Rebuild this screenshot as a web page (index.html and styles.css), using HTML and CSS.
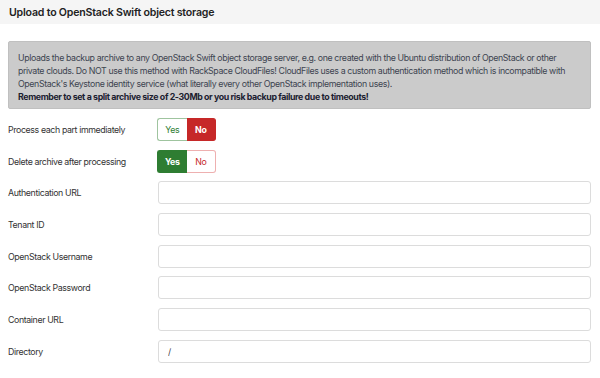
FILE: index.html
```html
<!DOCTYPE html>
<html lang="en">
<head>
  <meta charset="UTF-8">
  <meta name="viewport" content="width=device-width, initial-scale=1.0">
  <link rel="stylesheet" href="styles.css">
  <title>Upload to OpenStack Swift object storage</title>
</head>
<body>
  <div class="card">
    <div class="card-header">
      <h3>Upload to OpenStack Swift object storage</h3>
    </div>
    <div class="card-body">
      <div class="info">
        Uploads the backup archive to any OpenStack Swift object storage server, e.g. one created with the Ubuntu distribution of OpenStack or other private clouds. Do NOT use this method with RackSpace CloudFiles! CloudFiles uses a custom authentication method which is incompatible with OpenStack's Keystone identity service (what literally every other OpenStack implementation uses).<br>
        <strong>Remember to set a split archive size of 2-30Mb or you risk backup failure due to timeouts!</strong>
      </div>

      <div class="form">
        <label>Process each part immediately</label>
        <div class="toggle">
          <span class="yes">Yes</span>
          <span class="no active">No</span>
        </div>

        <label>Delete archive after processing</label>
        <div class="toggle">
          <span class="yes active">Yes</span>
          <span class="no">No</span>
        </div>

        <label>Authentication URL</label>
        <input type="text" value="">

        <label>Tenant ID</label>
        <input type="text" value="">

        <label>OpenStack Username</label>
        <input type="text" value="">

        <label>OpenStack Password</label>
        <input type="password" value="">

        <label>Container URL</label>
        <input type="text" value="">

        <label>Directory</label>
        <input type="text" value="/">
      </div>
    </div>
  </div>
</body>
</html>
```

FILE: styles.css
```css
body {
  margin: 0;
  font-family: Inter, "Open Sans", sans-serif;
  font-size: 8.8px;
  letter-spacing: -0.38px;
  color: #333;
  background: #fff;
}

.card-header {
  height: 24px;
  background: #f5f5f5;
  padding: 0 9px;
  display: flex;
  align-items: center;
}

.card-header h3 {
  margin: 0;
  font-size: 10.6px;
  font-weight: 600;
  letter-spacing: -0.2px;
  color: #222;
}

.card-body {
  padding: 17px 9px 0 8px;
}

.info {
  background: #cbcbcb;
  border: 1px solid #c0c0c0;
  border-radius: 2px;
  padding: 9px 9px 5px;
  line-height: 13px;
  color: #3d4450;
}

.info strong {
  color: #1b2030;
  font-weight: 700;
}

.form {
  display: grid;
  grid-template-columns: 149px 1fr;
  align-items: center;
  row-gap: 8.7px;
  margin-top: 9px;
}

.form label {
  color: #333;
}

.toggle {
  display: flex;
  width: 59px;
  height: 23px;
}

.toggle span {
  flex: 1;
  display: flex;
  align-items: center;
  justify-content: center;
  box-sizing: border-box;
}

.toggle .yes {
  color: #2e7d32;
  border: 1px solid #9fc49f;
  border-right: none;
  border-radius: 3px 0 0 3px;
}

.toggle .no {
  color: #c62828;
  border: 1px solid #eeb0b0;
  border-left: none;
  border-radius: 0 3px 3px 0;
}

.toggle .yes.active {
  background: #2e7d32;
  border-color: #2e7d32;
  color: #fff;
  font-weight: 700;
}

.toggle .no.active {
  background: #c62828;
  border-color: #c62828;
  color: #fff;
  font-weight: 700;
}

.form input {
  height: 23px;
  box-sizing: border-box;
  margin: 0 0 0 1px;
  border: 1px solid #dcdcdc;
  border-radius: 3px;
  padding: 0 9px;
  font-family: inherit;
  font-size: 8.8px;
  color: #444;
}
```
